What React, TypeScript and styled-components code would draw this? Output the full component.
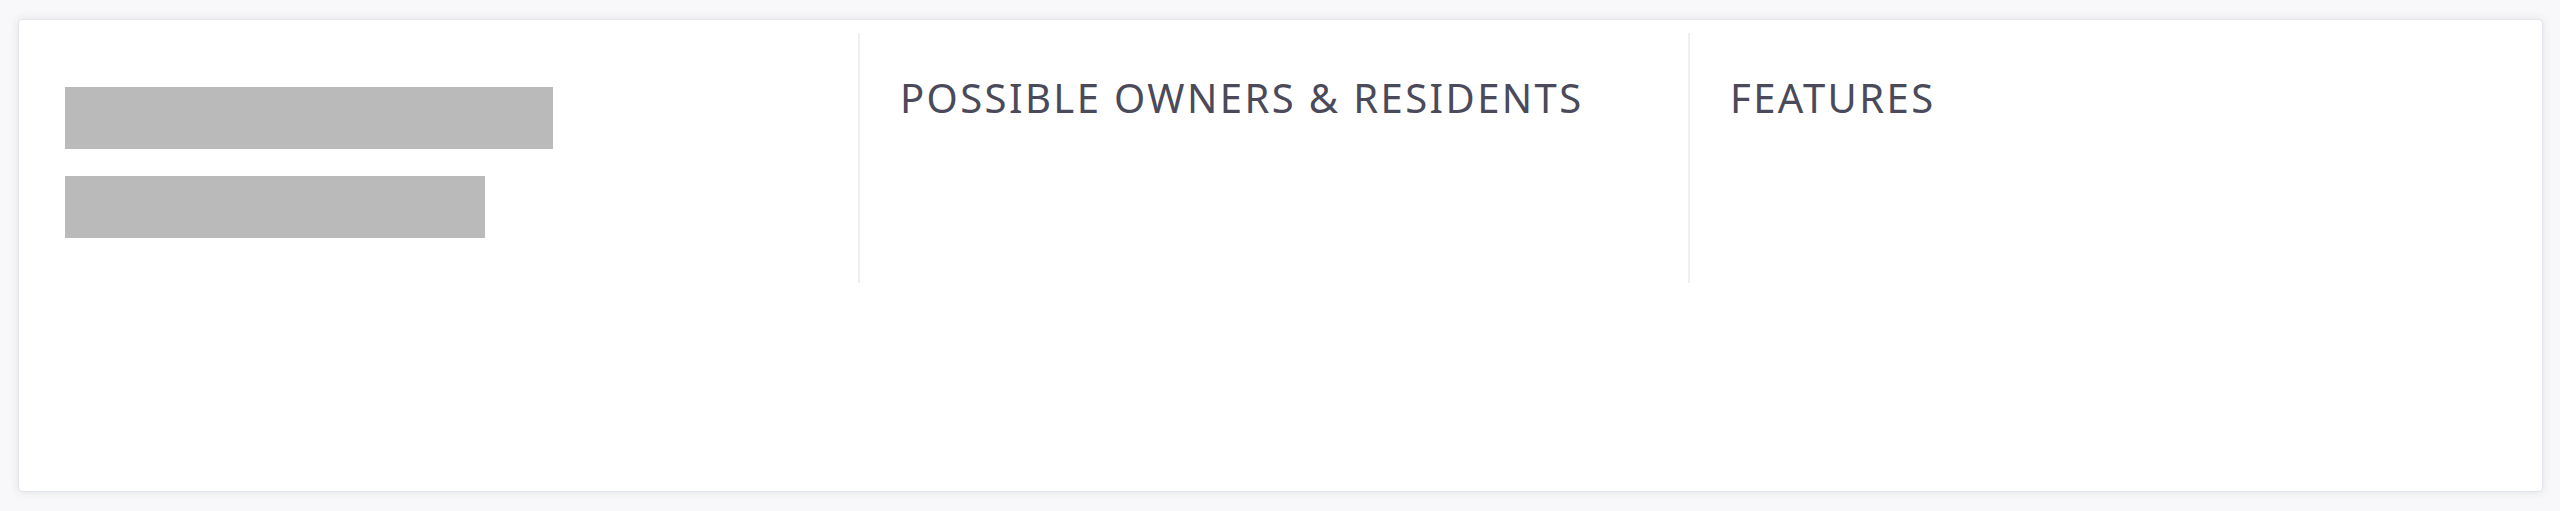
import React from 'react';
import styled, { createGlobalStyle } from 'styled-components';

const GlobalStyle = createGlobalStyle`
  body {
    margin: 0;
    background: #f8f8fa;
    font-family: "Noto Sans", "Open Sans", sans-serif;
  }
`;

const Page = styled.div`
  padding: 19px 17px 19px 18px;
`;

const Card = styled.section`
  width: 2525px;
  height: 473px;
  box-sizing: border-box;
  background: #fff;
  border: 1px solid #e3e5ec;
  border-radius: 4px;
  box-shadow: 0 0 10px rgba(40, 45, 70, 0.1);
  padding-top: 13px;
`;

const Columns = styled.div`
  display: grid;
  grid-template-columns: 839px 830px 1fr;
  height: 250px;
`;

const Column = styled.div<{ $divider?: boolean }>`
  box-sizing: border-box;
  border-left: ${(p) => (p.$divider ? '2px solid #efeff2' : 'none')};
  padding: ${(p) => (p.$divider ? '44px 0 0 40px' : '54px 0 0 46px')};
  display: flex;
  flex-direction: column;
  gap: 27px;
`;

const Placeholder = styled.div<{ $width: number }>`
  width: ${(p) => p.$width}px;
  height: 62px;
  background: #bababa;
`;

const Heading = styled.h2`
  margin: 0;
  font-size: 40px;
  line-height: 42px;
  font-weight: 400;
  color: #4a4a5a;
  letter-spacing: 2.4px;
  text-transform: uppercase;
  white-space: nowrap;
`;

export default function App() {
  return (
    <Page>
      <GlobalStyle />
      <Card>
        <Columns>
          <Column>
            <Placeholder $width={488} />
            <Placeholder $width={420} />
          </Column>
          <Column $divider>
            <Heading>Possible Owners &amp; Residents</Heading>
          </Column>
          <Column $divider>
            <Heading>Features</Heading>
          </Column>
        </Columns>
      </Card>
    </Page>
  );
}
